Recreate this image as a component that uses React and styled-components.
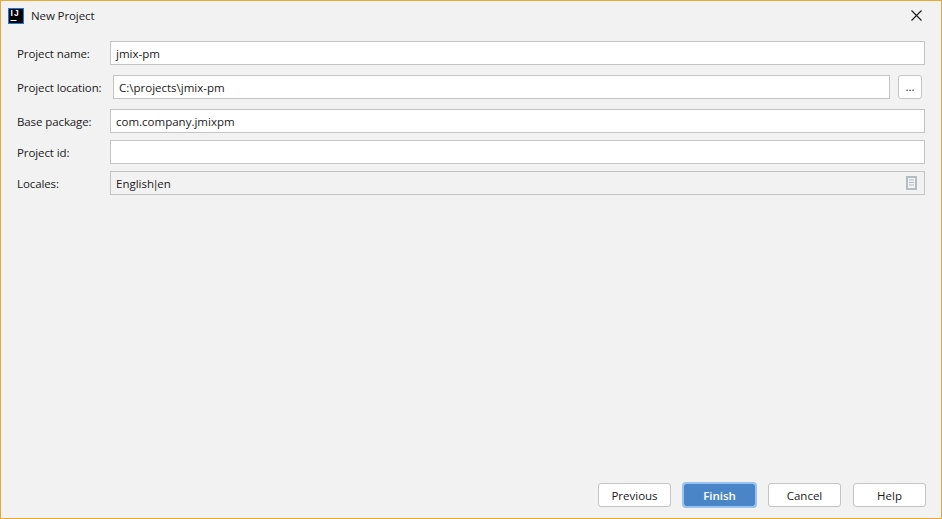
import React from 'react';
import styled, { createGlobalStyle } from 'styled-components';

const GlobalStyle = createGlobalStyle`
  html, body {
    margin: 0;
    padding: 0;
    background: #f2f2f2;
  }
`;

const Window = styled.div`
  box-sizing: border-box;
  width: 942px;
  height: 519px;
  display: flex;
  flex-direction: column;
  background: #f2f2f2;
  border: 1px solid #efa633;
  font-family: "Open Sans", "Noto Sans", sans-serif;
  font-size: 11.5px;
  color: #1a1a1a;
`;

const TitleBar = styled.div`
  height: 30px;
  display: flex;
  align-items: center;
  padding: 0 19px 0 7px;
`;

const TitleText = styled.span`
  margin: 0 0 2px 7px;
  flex: 1;
  letter-spacing: -0.1px;
`;

const CloseButton = styled.svg`
  width: 11px;
  height: 11px;
  display: block;
  margin-bottom: 1px;
`;

const Form = styled.div`
  display: flex;
  flex-direction: column;
  padding: 10px 16px 0;
  flex: 1;
`;

const Row = styled.div`
  display: flex;
  align-items: center;
  height: 24px;
  margin-top: ${(p) => p.$gap}px;
`;

const Label = styled.label`
  width: ${(p) => p.$width || 93}px;
  flex: none;
  letter-spacing: -0.1px;
`;

const Field = styled.div`
  box-sizing: border-box;
  flex: 1;
  height: 24px;
  display: flex;
  align-items: center;
  justify-content: space-between;
  padding: 0 7px 0 5px;
  border: 1px solid #c4c4c4;
  background: ${(p) => (p.$disabled ? '#f2f2f2' : '#ffffff')};
`;

const Pipe = styled.span`
  margin: 0 -1.5px;
`;

const BrowseButton = styled.button`
  box-sizing: border-box;
  width: 24px;
  height: 24px;
  flex: none;
  margin: 0 3px 0 8px;
  padding: 0 0 2px;
  border: 1px solid #c4c4c4;
  border-radius: 3px;
  background: #ffffff;
  font: inherit;
  color: #1a1a1a;
`;

const Footer = styled.div`
  display: flex;
  justify-content: flex-end;
  gap: 12px;
  padding: 0 15px 11px 0;
`;

const Button = styled.button`
  box-sizing: border-box;
  width: 73px;
  height: 24px;
  padding: 0;
  border: 1px solid ${(p) => (p.$primary ? '#97c3f3' : '#c4c4c4')};
  border-radius: 3px;
  background: ${(p) => (p.$primary ? '#4a86c7' : '#ffffff')};
  background-clip: padding-box;
  box-shadow: ${(p) => (p.$primary ? '0 0 0 1px #97c3f3' : 'none')};
  color: ${(p) => (p.$primary ? '#ffffff' : '#1a1a1a')};
  font: inherit;
  font-weight: ${(p) => (p.$primary ? 600 : 400)};
`;

const AppIcon = () => (
  <svg width="16" height="16" viewBox="0 0 16 16">
    <rect width="16" height="16" fill="#0b7fe0" />
    <rect x="1" y="1" width="14" height="14" fill="#000000" />
    <text x="2.500" y="8.300" fontFamily="Liberation Sans, sans-serif" fontSize="8.500" fontWeight="700" letterSpacing="1.200" fill="#ffffff">IJ</text>
    <rect x="2.500" y="12" width="6" height="1" fill="#ffffff" />
  </svg>
);

const NotesIcon = () => (
  <svg width="11" height="14" viewBox="0 0 11 14">
    <rect width="11" height="14" fill="#b4bcc4" />
    <rect x="2" y="2" width="7" height="10" fill="#f2f2f2" />
    <path d="M3 4h5M3 6.500h5M3 9h5" stroke="#b4bcc4" strokeWidth="1" />
  </svg>
);

export default function App() {
  return (
    <Window>
      <GlobalStyle />
      <TitleBar>
        <AppIcon />
        <TitleText>New Project</TitleText>
        <CloseButton viewBox="0 0 11 11">
          <path d="M.5.5l10 10M10.500.5l-10 10" stroke="#1a1a1a" strokeWidth="1.100" fill="none" />
        </CloseButton>
      </TitleBar>
      <Form>
        <Row $gap={0}>
          <Label>Project name:</Label>
          <Field>jmix-pm</Field>
        </Row>
        <Row $gap={10}>
          <Label $width={96}>Project location:</Label>
          <Field>C:\projects\jmix-pm</Field>
          <BrowseButton>...</BrowseButton>
        </Row>
        <Row $gap={10}>
          <Label>Base package:</Label>
          <Field>com.company.jmixpm</Field>
        </Row>
        <Row $gap={7}>
          <Label>Project id:</Label>
          <Field />
        </Row>
        <Row $gap={7}>
          <Label>Locales:</Label>
          <Field $disabled>
            <span>English<Pipe>|</Pipe>en</span>
            <NotesIcon />
          </Field>
        </Row>
      </Form>
      <Footer>
        <Button>Previous</Button>
        <Button $primary>Finish</Button>
        <Button>Cancel</Button>
        <Button>Help</Button>
      </Footer>
    </Window>
  );
}
